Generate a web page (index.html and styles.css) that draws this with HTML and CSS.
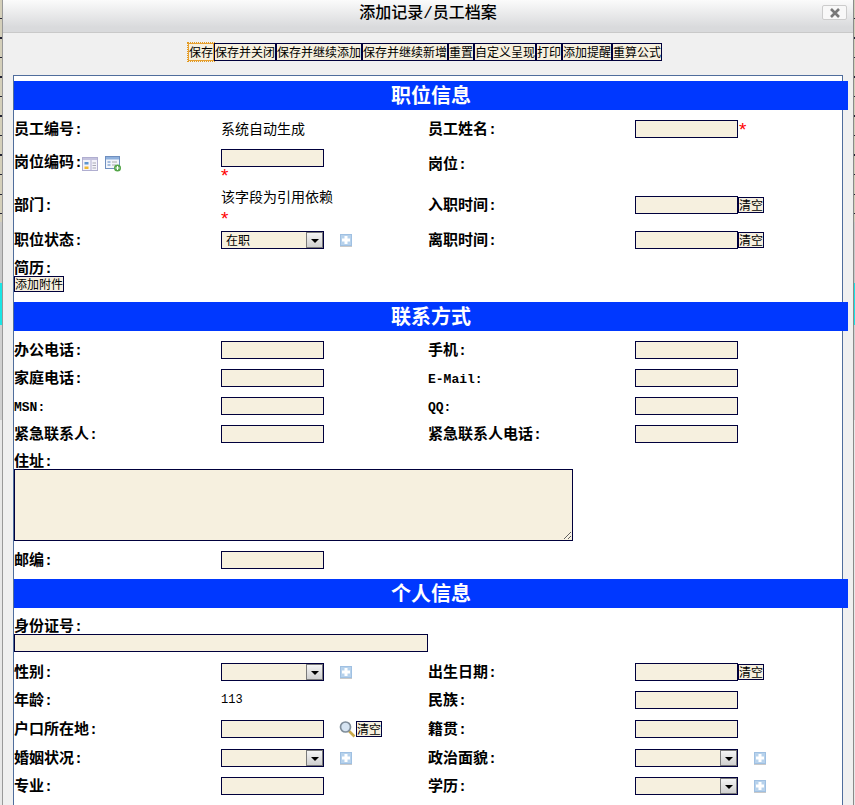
FILE: index.html
```html
<!DOCTYPE html>
<html lang="zh">
<head>
<meta charset="utf-8">
<title>添加记录/员工档案</title>
<link rel="stylesheet" href="styles.css">
</head>
<body>
<svg class="defs" width="0" height="0" aria-hidden="true"><symbol id="plus" viewBox="0 0 12 13"><rect width="12" height="13" fill="#c9c9c9"/><rect width="12" height="12" fill="#9fc0e2"/><rect x="1" y="1" width="10" height="10" fill="#b7d2ec"/><path d="M6 2v8M2 6h8" stroke="#fff" stroke-width="3"/></symbol></svg>
<div class="backdrop">
  <div class="dialog">
    <header class="titlebar">
      <h1 class="title">添加记录/员工档案</h1>
      <button class="close" type="button" aria-label="关闭">
        <svg width="12" height="12" viewBox="0 0 12 12"><path d="M2 2l8 8M10 2l-8 8" stroke="#777" stroke-width="2.6"/></svg>
      </button>
    </header>
    <div class="toolbar">
      <button class="btn focus" type="button">保存</button><button class="btn" type="button">保存并关闭</button><button class="btn" type="button">保存并继续添加</button><button class="btn" type="button">保存并继续新增</button><button class="btn" type="button">重置</button><button class="btn" type="button">自定义呈现</button><button class="btn" type="button">打印</button><button class="btn" type="button">添加提醒</button><button class="btn" type="button">重算公式</button>
    </div>
    <main class="panel">
      <h2 class="bar">职位信息</h2>
      <div class="grid">
        <div class="row r1">
          <div class="label">员工编号:</div><div class="value note">系统自动生成</div>
          <div class="label">员工姓名:</div><div class="value"><span class="input"></span><span class="req inline">*</span></div>
        </div>
        <div class="row r2">
          <div class="label lookup">岗位编码:
            <svg class="ico" width="17" height="15" viewBox="0 0 17 15"><rect x=".5" y=".5" width="15" height="13" fill="#f4f3fa" stroke="#b0aed0"/><rect x="1" y="1" width="14" height="2" fill="#c4c2de"/><path d="M9 3v10" stroke="#b0aed0"/><rect x="2.500" y="5" width="4" height="2.500" fill="#5d95cf"/><rect x="2.500" y="9.500" width="4" height="2.500" fill="#f0b730"/><path d="M10.500 6h3.500M10.500 8.500h3.500M10.500 11h3.500" stroke="#a9a9b5"/></svg>
            <svg class="ico gap" width="17" height="16" viewBox="0 0 17 16"><rect x=".5" y=".5" width="14" height="12" fill="#f2f5fb" stroke="#6f8fbf"/><rect x="1" y="1" width="13" height="2.500" fill="#8fb1de"/><path d="M2.500 6h3M2.500 9h3" stroke="#5a86c0"/><path d="M7 6h5M7 9h4" stroke="#aaa"/><circle cx="12.500" cy="12" r="3.500" fill="#53a548"/><path d="M10.500 12h4M12.500 10v4" stroke="#fff" stroke-width="1.200"/></svg>
          </div>
          <div class="value"><span class="input"></span><span class="req block">*</span></div>
          <div class="label">岗位:</div><div class="value"></div>
        </div>
        <div class="row r3">
          <div class="label">部门:</div><div class="value">该字段为引用依赖<span class="req block dep">*</span></div>
          <div class="label">入职时间:</div><div class="value"><span class="input"></span><button class="btn clear" type="button">清空</button></div>
        </div>
        <div class="row r4">
          <div class="label">职位状态:</div>
          <div class="value"><span class="select">在职<span class="arrow"></span></span><svg class="plus" width="12" height="13"><use href="#plus"/></svg></div>
          <div class="label">离职时间:</div><div class="value"><span class="input"></span><button class="btn clear" type="button">清空</button></div>
        </div>
      </div>
      <div class="stack resume">
        <div class="label">简历:</div>
        <button class="btn attach" type="button">添加附件</button>
      </div>
      <h2 class="bar b2">联系方式</h2>
      <div class="grid contact">
        <div class="row r5"><div class="label">办公电话:</div><div class="value"><span class="input"></span></div><div class="label">手机:</div><div class="value"><span class="input"></span></div></div>
        <div class="row r5"><div class="label">家庭电话:</div><div class="value"><span class="input"></span></div><div class="label mono">E-Mail:</div><div class="value"><span class="input"></span></div></div>
        <div class="row r5"><div class="label mono">MSN:</div><div class="value"><span class="input"></span></div><div class="label mono">QQ:</div><div class="value"><span class="input"></span></div></div>
        <div class="row r5"><div class="label">紧急联系人:</div><div class="value"><span class="input"></span></div><div class="label">紧急联系人电话:</div><div class="value"><span class="input"></span></div></div>
      </div>
      <div class="stack address">
        <div class="label">住址:</div>
        <textarea class="area"></textarea>
      </div>
      <div class="grid">
        <div class="row r6"><div class="label">邮编:</div><div class="value"><span class="input"></span></div></div>
      </div>
      <h2 class="bar">个人信息</h2>
      <div class="stack idcard">
        <div class="label">身份证号:</div>
        <span class="input wide"></span>
      </div>
      <div class="grid personal">
        <div class="row r7"><div class="label">性别:</div><div class="value"><span class="select"><span class="arrow"></span></span><svg class="plus" width="12" height="13"><use href="#plus"/></svg></div><div class="label">出生日期:</div><div class="value"><span class="input"></span><button class="btn clear" type="button">清空</button></div></div>
        <div class="row r8"><div class="label">年龄:</div><div class="value mono-val">113</div><div class="label">民族:</div><div class="value"><span class="input"></span></div></div>
        <div class="row r8"><div class="label">户口所在地:</div><div class="value"><span class="input"></span><svg class="search" width="17" height="18" viewBox="0 0 17 18"><path d="M10 11l5.500 5.500" stroke="#c9a94a" stroke-width="2.600"/><circle cx="6.500" cy="7" r="5" fill="#d6e4f2" stroke="#7f8d9a" stroke-width="1.700"/></svg><button class="btn clear" type="button">清空</button></div><div class="label">籍贯:</div><div class="value"><span class="input"></span></div></div>
        <div class="row r7"><div class="label">婚姻状况:</div><div class="value"><span class="select"><span class="arrow"></span></span><svg class="plus" width="12" height="13"><use href="#plus"/></svg></div><div class="label">政治面貌:</div><div class="value"><span class="select"><span class="arrow"></span></span><svg class="plus" width="12" height="13"><use href="#plus"/></svg></div></div>
        <div class="row r7"><div class="label">专业:</div><div class="value"><span class="input"></span></div><div class="label">学历:</div><div class="value"><span class="select"><span class="arrow"></span></span><svg class="plus" width="12" height="13"><use href="#plus"/></svg></div></div>
      </div>
    </main>
  </div>
</div>
</body>
</html>
```
FILE: styles.css
```css
* { box-sizing: border-box; }
html, body { margin: 0; height: 100%; overflow: hidden; }
body {
  font-family: "Noto Sans CJK SC", sans-serif;
  font-size: 14px;
  color: #000;
  background:
    repeating-linear-gradient(#d4cfba 0 18px, #223 18px 19.500px) 0 0 / 100% 222px no-repeat,
    linear-gradient(#d4cfba 0 222px, #c8c8c8 222px 283px, #18e6e6 283px 325px, #d0d0d0 325px 420px, #e8e8e8 420px);
}
.defs { position: absolute; }
.backdrop { height: 805px; padding: 0 1px 0 2px; overflow: hidden; }
.dialog { height: 805px; background: #f0f0f0; border-left: 1px solid #999; border-right: 1px solid #8a8a8a; overflow: hidden; }
.titlebar { height: 33px; display: flex; align-items: center; justify-content: center; position: relative; background: linear-gradient(#fbfbfb, #d9dadc 85%); border-bottom: 1px solid #c9c9c9; }
.title { margin: 0 0 4px; font-family: "Liberation Mono", "Noto Sans CJK SC", sans-serif; font-size: 16px; font-weight: 500; line-height: 24px; }
.close { position: absolute; right: 6px; top: 5px; width: 25px; height: 15px; padding: 0; display: flex; align-items: center; justify-content: center; background: #f8f8f8; border: 1px solid #ccc; border-radius: 2px; }
.toolbar { height: 42px; padding: 10px 6px 0 0; display: flex; justify-content: center; align-items: flex-start; }
.btn { height: 16px; padding: 0; margin: 0; font: 12px/14px "Noto Sans CJK SC", sans-serif; color: #000; background: #f6f0df; border: 1px solid #00003c; white-space: nowrap; }
.toolbar .btn { height: 18px; }
.btn.focus { outline: 1px dotted #e09a20; border-color: #e8a030; }
.panel { margin-left: 10px; width: 830px; height: 740px; background: #fff; border: 1px solid #4f6d9c; border-bottom: 0; padding-top: 5px; }
.bar { margin: 0 -6px 0 0; height: 29px; background: #0038ff; color: #fff; text-align: center; font-size: 20px; font-weight: 700; line-height: 27px; }
.b2 { margin-top: 10px; }
.row { display: grid; grid-template-columns: 207px 207px 207px 207px; align-items: center; }
.r1 { height: 38px; }
.r2 { height: 32px; }
.r3 { height: 50px; }
.r4 { height: 20px; }
.r5 { height: 28px; }
.r6 { height: 38px; }
.r7 { height: 28px; }
.r8 { height: 29px; padding-bottom: 1px; }
.label { height: 16px; font-family: "Liberation Mono", "Noto Sans CJK SC", sans-serif; font-size: 15px; font-weight: 700; line-height: 20px; white-space: nowrap; }
.label.mono { font-size: 13px; }
.value { display: flex; flex-wrap: wrap; align-items: center; line-height: 18px; }
.r1 .value { margin-top: -1px; }
.r1 .value.note { margin-top: -3px; }
.mono-val { font: 12px/16px "Liberation Mono", monospace; }
.input { display: block; width: 103px; height: 18px; background: #f6f0df; border: 1px solid #00003c; }
.r1 .input { margin-top: 1px; }
.input.wide { width: 414px; }
.req { color: #f00; font-size: 19px; font-family: "Liberation Sans", sans-serif; line-height: 12px; }
.req.block { display: block; width: 100%; height: 12px; padding-top: 3px; }
.req.dep { margin-top: 5px; margin-bottom: 1px; }
.req.inline { margin-left: 1px; padding-top: 2px; }
.select { position: relative; display: block; width: 103px; height: 18px; padding-left: 4px; font-size: 12px; line-height: 16px; background: #f6f0df; border: 1px solid #00003c; }
.arrow { position: absolute; right: 0; top: 0; width: 17px; height: 16px; background: linear-gradient(#f4f4f4, #d0d0d0); border: 1px solid #7a7a7a; }
.arrow::after { content: ""; position: absolute; left: 4px; top: 6px; border: 4px solid transparent; border-top: 4px solid #000; border-bottom: 0; }
.plus { margin-left: 16px; }
.search { margin-left: 15px; }
.lookup { display: flex; align-items: center; }
.ico { margin-left: -1px; }
.ico.gap { margin-left: 6px; }
.stack { display: flex; flex-direction: column; align-items: flex-start; }
.resume { padding-top: 10px; }
.contact { padding-top: 5px; }
.area { display: block; width: 559px; height: 72px; margin: 0; background: #f6f0df; border: 1px solid #00003c; }
.address { padding-top: 5px; }
.idcard { padding-top: 10px; }
.personal { padding-top: 6px; }
```
